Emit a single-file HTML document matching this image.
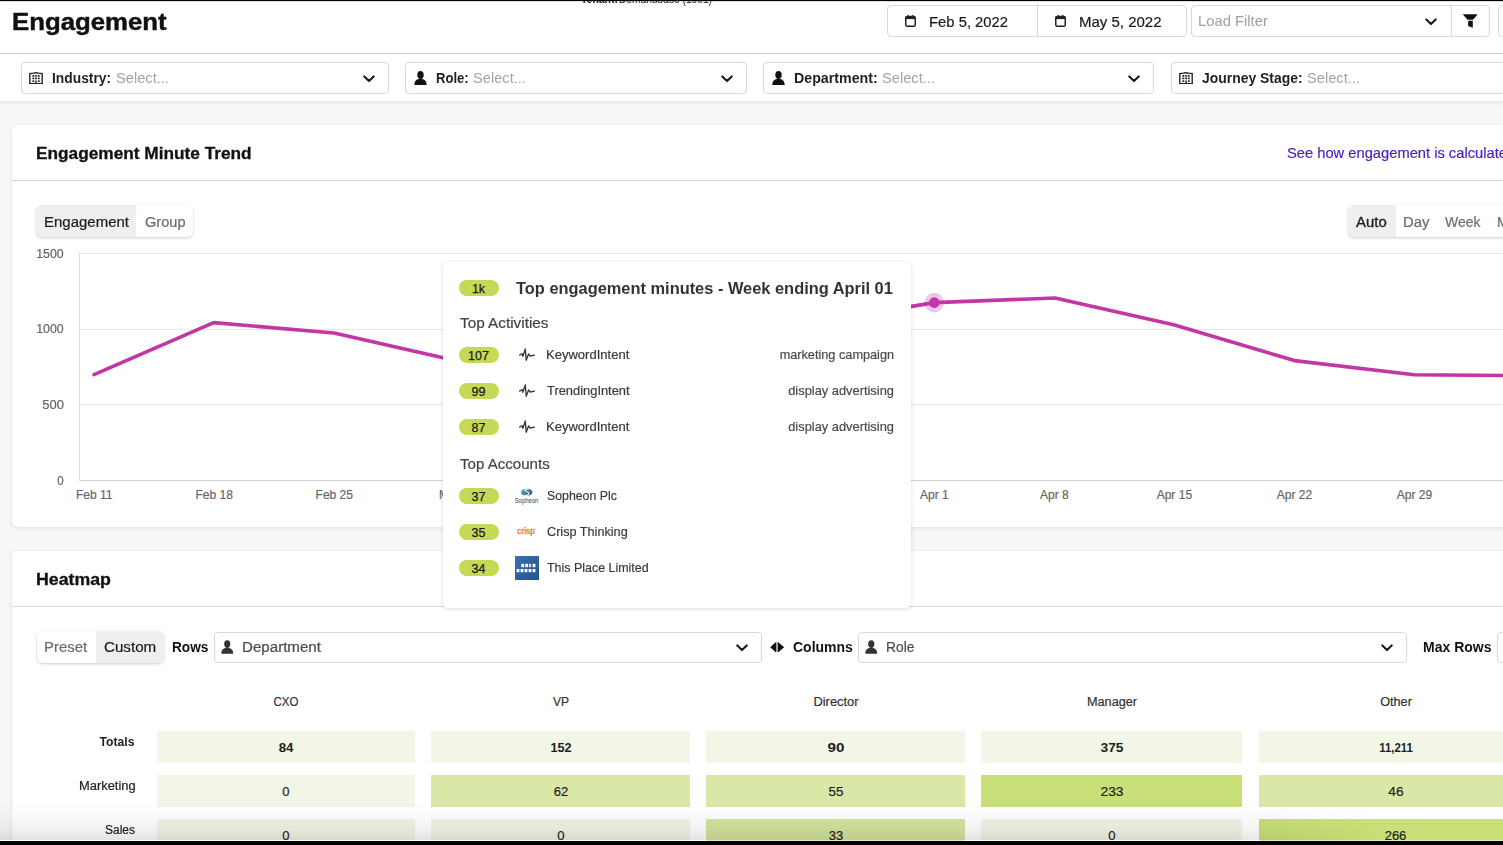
<!DOCTYPE html>
<html><head><meta charset="utf-8"><title>Engagement</title>
<style>
html,body{margin:0;padding:0}
body{width:1503px;height:845px;overflow:hidden;position:relative;background:#f8f7f5;font-family:"Liberation Sans",sans-serif}
.t{position:absolute;white-space:nowrap;line-height:1}
</style></head><body>
<div style="position:absolute;left:0px;top:0px;width:1503px;height:53px;background:#fff"></div>
<div style="position:absolute;left:0px;top:53px;width:1503px;height:1px;background:#d4d4d4"></div>
<div style="position:absolute;left:0px;top:54px;width:1503px;height:47px;background:#fff;box-shadow:0 1px 4px rgba(0,0,0,0.10)"></div>
<div class="t" style="left:12.43px;top:10.00px;font-size:24px;font-weight:700;color:#111;transform:scaleX(1.0732);transform-origin:left;-webkit-text-stroke:0.45px #111;">Engagement</div>
<div class="t" style="left:581.00px;top:-7.00px;font-size:12px;font-weight:700;color:#222;transform:scaleX(0.8687);transform-origin:left;">Tenant:</div>
<div class="t" style="left:619.00px;top:-7.00px;font-size:12px;font-weight:400;color:#444;transform:scaleX(0.8501);transform-origin:left;-webkit-text-stroke:0.2px #444;">Demandbase (1001)</div>
<div style="position:absolute;left:887px;top:5px;width:300px;height:32px;border:1px solid #d9d9d9;border-radius:4px;background:#fff;box-sizing:border-box"></div>
<div style="position:absolute;left:1036.5px;top:6px;width:1px;height:30px;background:#d9d9d9"></div>
<svg style="position:absolute;left:905px;top:15px" width="11" height="12" viewBox="0 0 11 12"><rect x="0.75" y="1.5" width="9.5" height="9.8" rx="1.6" fill="none" stroke="#222" stroke-width="1.5"/><rect x="0.75" y="1.5" width="9.5" height="2.6" fill="#222"/><rect x="2.5" y="0" width="1.3" height="2" fill="#222"/><rect x="7.2" y="0" width="1.3" height="2" fill="#222"/></svg>
<svg style="position:absolute;left:1055px;top:15px" width="11" height="12" viewBox="0 0 11 12"><rect x="0.75" y="1.5" width="9.5" height="9.8" rx="1.6" fill="none" stroke="#222" stroke-width="1.5"/><rect x="0.75" y="1.5" width="9.5" height="2.6" fill="#222"/><rect x="2.5" y="0" width="1.3" height="2" fill="#222"/><rect x="7.2" y="0" width="1.3" height="2" fill="#222"/></svg>
<div class="t" style="left:928.98px;top:15.00px;font-size:14.5px;font-weight:400;color:#1a1a1a;transform:scaleX(1.0219);transform-origin:left;-webkit-text-stroke:0.2px #1a1a1a;">Feb 5, 2022</div>
<div class="t" style="left:1078.97px;top:15.00px;font-size:14.5px;font-weight:400;color:#1a1a1a;transform:scaleX(1.0338);transform-origin:left;-webkit-text-stroke:0.2px #1a1a1a;">May 5, 2022</div>
<div style="position:absolute;left:1191px;top:5px;width:299px;height:32px;border:1px solid #d9d9d9;border-radius:4px;background:#fff;box-sizing:border-box"></div>
<div style="position:absolute;left:1450.5px;top:6px;width:1px;height:30px;background:#d9d9d9"></div>
<div class="t" style="left:1197.98px;top:14.00px;font-size:14.5px;font-weight:400;color:#a0a0a0;transform:scaleX(1.0195);transform-origin:left;">Load Filter</div>
<svg style="position:absolute;left:1424.5px;top:17.8px" width="12" height="8" viewBox="0 0 12 8"><path d="M1.3 1.4 L6 6.1 L10.7 1.4" fill="none" stroke="#1a1a1a" stroke-width="2.1" stroke-linecap="round" stroke-linejoin="round"/></svg>
<svg style="position:absolute;left:1463px;top:14px" width="15" height="14" viewBox="0 0 15 14"><path d="M0.4 0.2 H14 Q14.6 0.2 14.3 0.8 L10 5.7 H4.6 L0.1 0.8 Q-0.1 0.2 0.4 0.2 Z M5.2 6.7 H9.8 V13.4 Q9.6 13.8 9.1 13.6 L5.6 12.2 Q5 11.8 5.1 11.2 Z" fill="#111"/></svg>
<div style="position:absolute;left:1498px;top:5px;width:30px;height:32px;border:1px solid #d9d9d9;border-radius:4px;background:#fff;box-sizing:border-box"></div>
<div style="position:absolute;left:21px;top:62px;width:367.5px;height:32px;border:1px solid #d9d9d9;border-radius:4px;background:#fff;box-sizing:border-box"></div>
<svg style="position:absolute;left:29.2px;top:71.6px" width="14" height="12.5" viewBox="0 0 14 12.5"><path d="M0.8 11.8 V1.6 L4.5 1.2 Q7 0.2 9.5 1.2 L13.2 1.6 V11.8 Z" fill="none" stroke="#222" stroke-width="1.35"/><g fill="#222"><rect x="3.4" y="2.9" width="1.9" height="1.9" rx="0.5"/><rect x="6.1" y="2.9" width="1.9" height="1.9" rx="0.5"/><rect x="8.8" y="2.9" width="1.9" height="1.9" rx="0.5"/><rect x="3.4" y="5.6" width="1.9" height="1.7" rx="0.5"/><rect x="6.1" y="5.6" width="1.9" height="1.7" rx="0.5"/><rect x="8.8" y="5.6" width="1.9" height="1.7" rx="0.5"/><rect x="3.4" y="8.2" width="1.9" height="1.9" rx="0.5"/><rect x="8.8" y="8.2" width="1.9" height="1.9" rx="0.5"/><rect x="6.3" y="8.4" width="1.4" height="3.4"/><rect x="0.2" y="11" width="13.6" height="1.5"/></g></svg>
<div class="t" style="left:52.00px;top:71.00px;font-size:14px;font-weight:700;color:#1f1f1f;transform:scaleX(0.9877);transform-origin:left;">Industry:</div>
<div class="t" style="left:115.60px;top:71.00px;font-size:14px;font-weight:400;color:#a3a3a3;transform:scaleX(1.0465);transform-origin:left;">Select...</div>
<svg style="position:absolute;left:362.5px;top:74.5px" width="12" height="8" viewBox="0 0 12 8"><path d="M1.3 1.4 L6 6.1 L10.7 1.4" fill="none" stroke="#1a1a1a" stroke-width="2.1" stroke-linecap="round" stroke-linejoin="round"/></svg>
<div style="position:absolute;left:404.5px;top:62px;width:342.0px;height:32px;border:1px solid #d9d9d9;border-radius:4px;background:#fff;box-sizing:border-box"></div>
<svg style="position:absolute;left:413.8px;top:71px" width="13" height="14" viewBox="0 0 13 14"><ellipse cx="6.5" cy="3.9" rx="3.2" ry="3.8" fill="#111"/><path d="M0.3 14 C0.3 10.6 1.8 8.8 4.5 8.1 L5.3 7.2 H7.7 L8.5 8.1 C11.2 8.8 12.7 10.6 12.7 14 Z" fill="#111"/></svg>
<div class="t" style="left:435.50px;top:71.00px;font-size:14px;font-weight:700;color:#1f1f1f;transform:scaleX(0.9319);transform-origin:left;">Role:</div>
<div class="t" style="left:473.00px;top:71.00px;font-size:14px;font-weight:400;color:#a3a3a3;transform:scaleX(1.0465);transform-origin:left;">Select...</div>
<svg style="position:absolute;left:720.5px;top:74.5px" width="12" height="8" viewBox="0 0 12 8"><path d="M1.3 1.4 L6 6.1 L10.7 1.4" fill="none" stroke="#1a1a1a" stroke-width="2.1" stroke-linecap="round" stroke-linejoin="round"/></svg>
<div style="position:absolute;left:763px;top:62px;width:391px;height:32px;border:1px solid #d9d9d9;border-radius:4px;background:#fff;box-sizing:border-box"></div>
<svg style="position:absolute;left:772.3px;top:71px" width="13" height="14" viewBox="0 0 13 14"><ellipse cx="6.5" cy="3.9" rx="3.2" ry="3.8" fill="#111"/><path d="M0.3 14 C0.3 10.6 1.8 8.8 4.5 8.1 L5.3 7.2 H7.7 L8.5 8.1 C11.2 8.8 12.7 10.6 12.7 14 Z" fill="#111"/></svg>
<div class="t" style="left:794.00px;top:71.00px;font-size:14px;font-weight:700;color:#1f1f1f;transform:scaleX(1.0148);transform-origin:left;">Department:</div>
<div class="t" style="left:881.80px;top:71.00px;font-size:14px;font-weight:400;color:#a3a3a3;transform:scaleX(1.0465);transform-origin:left;">Select...</div>
<svg style="position:absolute;left:1128px;top:74.5px" width="12" height="8" viewBox="0 0 12 8"><path d="M1.3 1.4 L6 6.1 L10.7 1.4" fill="none" stroke="#1a1a1a" stroke-width="2.1" stroke-linecap="round" stroke-linejoin="round"/></svg>
<div style="position:absolute;left:1171px;top:62px;width:389px;height:32px;border:1px solid #d9d9d9;border-radius:4px;background:#fff;box-sizing:border-box"></div>
<svg style="position:absolute;left:1179.2px;top:71.6px" width="14" height="12.5" viewBox="0 0 14 12.5"><path d="M0.8 11.8 V1.6 L4.5 1.2 Q7 0.2 9.5 1.2 L13.2 1.6 V11.8 Z" fill="none" stroke="#222" stroke-width="1.35"/><g fill="#222"><rect x="3.4" y="2.9" width="1.9" height="1.9" rx="0.5"/><rect x="6.1" y="2.9" width="1.9" height="1.9" rx="0.5"/><rect x="8.8" y="2.9" width="1.9" height="1.9" rx="0.5"/><rect x="3.4" y="5.6" width="1.9" height="1.7" rx="0.5"/><rect x="6.1" y="5.6" width="1.9" height="1.7" rx="0.5"/><rect x="8.8" y="5.6" width="1.9" height="1.7" rx="0.5"/><rect x="3.4" y="8.2" width="1.9" height="1.9" rx="0.5"/><rect x="8.8" y="8.2" width="1.9" height="1.9" rx="0.5"/><rect x="6.3" y="8.4" width="1.4" height="3.4"/><rect x="0.2" y="11" width="13.6" height="1.5"/></g></svg>
<div class="t" style="left:1202.00px;top:71.00px;font-size:14px;font-weight:700;color:#1f1f1f;transform:scaleX(0.9953);transform-origin:left;">Journey Stage:</div>
<div class="t" style="left:1307.20px;top:71.00px;font-size:14px;font-weight:400;color:#a3a3a3;transform:scaleX(1.0465);transform-origin:left;">Select...</div>
<div style="position:absolute;left:12px;top:125px;width:1560px;height:402px;background:#fff;border-radius:6px;box-shadow:0 1px 4px rgba(0,0,0,0.10)"></div>
<div style="position:absolute;left:12px;top:180px;width:1560px;height:1px;background:#d9d9d9"></div>
<div class="t" style="left:36.22px;top:146.00px;font-size:16px;font-weight:700;color:#111;transform:scaleX(1.0780);transform-origin:left;-webkit-text-stroke:0.3px #111;">Engagement Minute Trend</div>
<div class="t" style="left:1287.00px;top:146.00px;font-size:14.5px;font-weight:400;color:#4a1fc0;transform:scaleX(1.0141);transform-origin:left;-webkit-text-stroke:0.2px #4a1fc0;">See how engagement is calculated</div>
<div style="position:absolute;left:36px;top:205px;width:157px;height:32px;background:#fff;border-radius:6px;box-shadow:0 1px 3px rgba(0,0,0,0.20)"></div>
<div style="position:absolute;left:36px;top:205px;width:100px;height:32px;background:#eef0ed;border-radius:6px 0 0 6px"></div>
<div class="t" style="left:43.53px;top:215.00px;font-size:14px;font-weight:400;color:#1a1a1a;transform:scaleX(1.0700);transform-origin:left;-webkit-text-stroke:0.2px #1a1a1a;">Engagement</div>
<div class="t" style="left:145.00px;top:215.00px;font-size:14px;font-weight:400;color:#6b6b6b;transform:scaleX(1.0403);transform-origin:left;-webkit-text-stroke:0.2px #6b6b6b;">Group</div>
<div style="position:absolute;left:1347.5px;top:205px;width:200px;height:32px;background:#fff;border-radius:6px;box-shadow:0 1px 3px rgba(0,0,0,0.20)"></div>
<div style="position:absolute;left:1347.5px;top:205px;width:48px;height:32px;background:#eef0ed;border-radius:6px 0 0 6px"></div>
<div class="t" style="left:1356.00px;top:215.00px;font-size:14px;font-weight:400;color:#1a1a1a;transform:scaleX(1.0685);transform-origin:left;-webkit-text-stroke:0.3px #1a1a1a;">Auto</div>
<div class="t" style="left:1402.54px;top:215.00px;font-size:14px;font-weight:400;color:#6b6b6b;transform:scaleX(1.0629);transform-origin:left;-webkit-text-stroke:0.2px #6b6b6b;">Day</div>
<div class="t" style="left:1445.20px;top:215.00px;font-size:14px;font-weight:400;color:#6b6b6b;transform:scaleX(0.9964);transform-origin:left;-webkit-text-stroke:0.2px #6b6b6b;">Week</div>
<div class="t" style="left:1497.00px;top:215.00px;font-size:14px;font-weight:400;color:#6b6b6b;-webkit-text-stroke:0.2px #6b6b6b;">Month</div>
<svg style="position:absolute;left:0;top:0" width="1503" height="845"><line x1="79" y1="253.5" x2="1503" y2="253.5" stroke="#e6e6e6" stroke-width="1"/><line x1="79" y1="329.5" x2="1503" y2="329.5" stroke="#e6e6e6" stroke-width="1"/><line x1="79" y1="404.5" x2="1503" y2="404.5" stroke="#e6e6e6" stroke-width="1"/><line x1="79" y1="480.5" x2="1503" y2="480.5" stroke="#d0d0d0" stroke-width="1"/><line x1="79.5" y1="253" x2="79.5" y2="481" stroke="#dcdcdc" stroke-width="1"/><path d="M94,374.6 L213.7,322.6 L334,333 L454,360.3 L574,372 L694,350 L814,322.6 L934.3,302.6 L1055,298 L1173.7,324.7 L1294.3,360.6 L1414.2,374.7 L1534,375.8" fill="none" stroke="#c236a6" stroke-width="3.6" stroke-linejoin="round" stroke-linecap="round"/><circle cx="934.3" cy="302.6" r="9.8" fill="#c236a6" fill-opacity="0.27"/><circle cx="934.3" cy="302.6" r="5.3" fill="#c236a6"/></svg>
<div class="t" style="right:1439.14px;top:248.00px;font-size:12px;font-weight:400;color:#666;transform:scaleX(1.0288);transform-origin:right;-webkit-text-stroke:0.2px #666;">1500</div>
<div class="t" style="right:1439.14px;top:323.00px;font-size:12px;font-weight:400;color:#666;transform:scaleX(1.0288);transform-origin:right;-webkit-text-stroke:0.2px #666;">1000</div>
<div class="t" style="right:1439.15px;top:399.00px;font-size:12px;font-weight:400;color:#666;transform:scaleX(1.0812);transform-origin:right;-webkit-text-stroke:0.2px #666;">500</div>
<div class="t" style="right:1439.11px;top:475.00px;font-size:12px;font-weight:400;color:#666;transform:scaleX(0.9571);transform-origin:right;-webkit-text-stroke:0.2px #666;">0</div>
<div class="t" style="left:94.20px;top:489.00px;font-size:12px;font-weight:400;color:#666;transform:translateX(-50%) scaleX(1.0000);-webkit-text-stroke:0.2px #666;">Feb 11</div>
<div class="t" style="left:214.22px;top:489.00px;font-size:12px;font-weight:400;color:#666;transform:translateX(-50%) scaleX(1.0000);-webkit-text-stroke:0.2px #666;">Feb 18</div>
<div class="t" style="left:334.24px;top:489.00px;font-size:12px;font-weight:400;color:#666;transform:translateX(-50%) scaleX(1.0000);-webkit-text-stroke:0.2px #666;">Feb 25</div>
<div class="t" style="left:454.26px;top:489.00px;font-size:12px;font-weight:400;color:#666;transform:translateX(-50%) scaleX(1.0000);-webkit-text-stroke:0.2px #666;">Mar 4</div>
<div class="t" style="left:574.28px;top:489.00px;font-size:12px;font-weight:400;color:#666;transform:translateX(-50%) scaleX(1.0000);-webkit-text-stroke:0.2px #666;">Mar 11</div>
<div class="t" style="left:694.30px;top:489.00px;font-size:12px;font-weight:400;color:#666;transform:translateX(-50%) scaleX(1.0000);-webkit-text-stroke:0.2px #666;">Mar 18</div>
<div class="t" style="left:814.32px;top:489.00px;font-size:12px;font-weight:400;color:#666;transform:translateX(-50%) scaleX(1.0000);-webkit-text-stroke:0.2px #666;">Mar 25</div>
<div class="t" style="left:934.34px;top:489.00px;font-size:12px;font-weight:400;color:#666;transform:translateX(-50%) scaleX(1.0000);-webkit-text-stroke:0.2px #666;">Apr 1</div>
<div class="t" style="left:1054.36px;top:489.00px;font-size:12px;font-weight:400;color:#666;transform:translateX(-50%) scaleX(1.0000);-webkit-text-stroke:0.2px #666;">Apr 8</div>
<div class="t" style="left:1174.38px;top:489.00px;font-size:12px;font-weight:400;color:#666;transform:translateX(-50%) scaleX(1.0000);-webkit-text-stroke:0.2px #666;">Apr 15</div>
<div class="t" style="left:1294.40px;top:489.00px;font-size:12px;font-weight:400;color:#666;transform:translateX(-50%) scaleX(1.0000);-webkit-text-stroke:0.2px #666;">Apr 22</div>
<div class="t" style="left:1414.42px;top:489.00px;font-size:12px;font-weight:400;color:#666;transform:translateX(-50%) scaleX(1.0000);-webkit-text-stroke:0.2px #666;">Apr 29</div>
<div class="t" style="left:1534.44px;top:489.00px;font-size:12px;font-weight:400;color:#666;transform:translateX(-50%) scaleX(1.0000);-webkit-text-stroke:0.2px #666;">May 6</div>
<div style="position:absolute;left:12px;top:551px;width:1560px;height:400px;background:#fff;border-radius:6px;box-shadow:0 1px 4px rgba(0,0,0,0.10)"></div>
<div style="position:absolute;left:12px;top:606px;width:1560px;height:1px;background:#d9d9d9"></div>
<div class="t" style="left:36.29px;top:572.00px;font-size:16px;font-weight:700;color:#111;transform:scaleX(1.1077);transform-origin:left;-webkit-text-stroke:0.3px #111;">Heatmap</div>
<div style="position:absolute;left:36.5px;top:631px;width:127.5px;height:32px;background:#fff;border-radius:6px;box-shadow:0 1px 3px rgba(0,0,0,0.20)"></div>
<div style="position:absolute;left:95.7px;top:631px;width:68.3px;height:32px;background:#eef0ed;border-radius:0 6px 6px 0"></div>
<div class="t" style="left:43.93px;top:640.00px;font-size:14px;font-weight:400;color:#6b6b6b;transform:scaleX(1.0689);transform-origin:left;-webkit-text-stroke:0.2px #6b6b6b;">Preset</div>
<div class="t" style="left:104.00px;top:640.00px;font-size:14px;font-weight:400;color:#1a1a1a;transform:scaleX(1.0826);transform-origin:left;-webkit-text-stroke:0.2px #1a1a1a;">Custom</div>
<div class="t" style="left:172.20px;top:640.00px;font-size:14px;font-weight:700;color:#111;transform:scaleX(0.9747);transform-origin:left;">Rows</div>
<div style="position:absolute;left:214px;top:631.5px;width:548px;height:31px;border:1px solid #d9d9d9;border-radius:4px;background:#fff;box-sizing:border-box"></div>
<svg style="position:absolute;left:221px;top:640px" width="12.5" height="14" viewBox="0 0 13 14"><ellipse cx="6.5" cy="3.9" rx="3.2" ry="3.8" fill="#333"/><path d="M0.3 14 C0.3 10.6 1.8 8.8 4.5 8.1 L5.3 7.2 H7.7 L8.5 8.1 C11.2 8.8 12.7 10.6 12.7 14 Z" fill="#333"/></svg>
<div class="t" style="left:241.62px;top:640.00px;font-size:14px;font-weight:400;color:#4a4a4a;transform:scaleX(1.0795);transform-origin:left;-webkit-text-stroke:0.2px #4a4a4a;">Department</div>
<svg style="position:absolute;left:736px;top:643.8px" width="12" height="8" viewBox="0 0 12 8"><path d="M1.3 1.4 L6 6.1 L10.7 1.4" fill="none" stroke="#1a1a1a" stroke-width="2.1" stroke-linecap="round" stroke-linejoin="round"/></svg>
<svg style="position:absolute;left:770.3px;top:641.6px" width="14.4" height="10.5" viewBox="0 0 14.4 10.5"><path d="M6 0 Q6.4 0 6.4 0.4 V10.1 Q6.4 10.5 6 10.5 L0.2 5.25 Z M8 0 Q7.6 0 7.6 0.4 V10.1 Q7.6 10.5 8 10.5 L14.2 5.25 Z" fill="#111"/></svg>
<div class="t" style="left:793.10px;top:640.00px;font-size:14px;font-weight:700;color:#111;transform:scaleX(0.9983);transform-origin:left;">Columns</div>
<div style="position:absolute;left:858px;top:631.5px;width:549px;height:31px;border:1px solid #d9d9d9;border-radius:4px;background:#fff;box-sizing:border-box"></div>
<svg style="position:absolute;left:865.3px;top:640.2px" width="12.5" height="14" viewBox="0 0 13 14"><ellipse cx="6.5" cy="3.9" rx="3.2" ry="3.8" fill="#333"/><path d="M0.3 14 C0.3 10.6 1.8 8.8 4.5 8.1 L5.3 7.2 H7.7 L8.5 8.1 C11.2 8.8 12.7 10.6 12.7 14 Z" fill="#333"/></svg>
<div class="t" style="left:886.01px;top:640.00px;font-size:14px;font-weight:400;color:#4a4a4a;transform:scaleX(0.9855);transform-origin:left;-webkit-text-stroke:0.2px #4a4a4a;">Role</div>
<svg style="position:absolute;left:1380.5px;top:643.6px" width="12" height="8" viewBox="0 0 12 8"><path d="M1.3 1.4 L6 6.1 L10.7 1.4" fill="none" stroke="#1a1a1a" stroke-width="2.1" stroke-linecap="round" stroke-linejoin="round"/></svg>
<div class="t" style="left:1423.30px;top:640.00px;font-size:14px;font-weight:700;color:#111;transform:scaleX(1.0004);transform-origin:left;">Max Rows</div>
<div style="position:absolute;left:1497px;top:631.5px;width:60px;height:31px;border:1px solid #d9d9d9;border-radius:4px;background:#fff;box-sizing:border-box"></div>
<div class="t" style="left:285.95px;top:696.00px;font-size:12px;font-weight:400;color:#333;transform:translateX(-50%) scaleX(0.9583);-webkit-text-stroke:0.2px #333;">CXO</div>
<div class="t" style="left:560.90px;top:696.00px;font-size:12px;font-weight:400;color:#333;transform:translateX(-50%) scaleX(0.9998);-webkit-text-stroke:0.2px #333;">VP</div>
<div class="t" style="left:835.90px;top:696.00px;font-size:12px;font-weight:400;color:#333;transform:translateX(-50%) scaleX(1.0759);-webkit-text-stroke:0.2px #333;">Director</div>
<div class="t" style="left:1111.95px;top:696.00px;font-size:12px;font-weight:400;color:#333;transform:translateX(-50%) scaleX(1.0598);-webkit-text-stroke:0.2px #333;">Manager</div>
<div class="t" style="left:1395.50px;top:696.00px;font-size:12px;font-weight:400;color:#333;transform:translateX(-50%) scaleX(1.0561);-webkit-text-stroke:0.2px #333;">Other</div>
<div class="t" style="right:1368.13px;top:736.00px;font-size:12px;font-weight:700;color:#222;transform:scaleX(1.0151);transform-origin:right;">Totals</div>
<div style="position:absolute;left:156.5px;top:731px;width:258.9px;height:32px;background:#f2f6e6"></div>
<div class="t" style="left:285.95px;top:741.00px;font-size:13px;font-weight:700;color:#1f1f1f;transform:translateX(-50%) scaleX(1.0177);">84</div>
<div style="position:absolute;left:431.4px;top:731px;width:259px;height:32px;background:#f2f6e6"></div>
<div class="t" style="left:560.90px;top:741.00px;font-size:13px;font-weight:700;color:#1f1f1f;transform:translateX(-50%) scaleX(0.9739);">152</div>
<div style="position:absolute;left:706.4px;top:731px;width:259px;height:32px;background:#f2f6e6"></div>
<div class="t" style="left:835.90px;top:741.00px;font-size:13px;font-weight:700;color:#1f1f1f;transform:translateX(-50%) scaleX(1.1666);">90</div>
<div style="position:absolute;left:981.4px;top:731px;width:261.1px;height:32px;background:#f2f6e6"></div>
<div class="t" style="left:1111.95px;top:741.00px;font-size:13px;font-weight:700;color:#1f1f1f;transform:translateX(-50%) scaleX(1.0624);">375</div>
<div style="position:absolute;left:1258.5px;top:731px;width:274px;height:32px;background:#f2f6e6"></div>
<div class="t" style="left:1395.50px;top:741.00px;font-size:13px;font-weight:700;color:#1f1f1f;transform:translateX(-50%) scaleX(0.8793);">11,211</div>
<div class="t" style="right:1367.07px;top:780.00px;font-size:12px;font-weight:400;color:#222;transform:scaleX(1.0766);transform-origin:right;-webkit-text-stroke:0.2px #222;">Marketing</div>
<div style="position:absolute;left:156.5px;top:775px;width:258.9px;height:32px;background:#f2f6e6"></div>
<div class="t" style="left:285.95px;top:785.00px;font-size:13px;font-weight:400;color:#1f1f1f;transform:translateX(-50%) scaleX(1.0000);-webkit-text-stroke:0.2px #1f1f1f;">0</div>
<div style="position:absolute;left:431.4px;top:775px;width:259px;height:32px;background:#d9e7a7"></div>
<div class="t" style="left:560.90px;top:785.00px;font-size:13px;font-weight:400;color:#1f1f1f;transform:translateX(-50%) scaleX(1.0049);-webkit-text-stroke:0.2px #1f1f1f;">62</div>
<div style="position:absolute;left:706.4px;top:775px;width:259px;height:32px;background:#d9e7a7"></div>
<div class="t" style="left:835.90px;top:785.00px;font-size:13px;font-weight:400;color:#1f1f1f;transform:translateX(-50%) scaleX(1.0260);-webkit-text-stroke:0.2px #1f1f1f;">55</div>
<div style="position:absolute;left:981.4px;top:775px;width:261.1px;height:32px;background:#c9df77"></div>
<div class="t" style="left:1111.95px;top:785.00px;font-size:13px;font-weight:400;color:#1f1f1f;transform:translateX(-50%) scaleX(1.0624);-webkit-text-stroke:0.2px #1f1f1f;">233</div>
<div style="position:absolute;left:1258.5px;top:775px;width:274px;height:32px;background:#d9e7a7"></div>
<div class="t" style="left:1395.50px;top:785.00px;font-size:13px;font-weight:400;color:#1f1f1f;transform:translateX(-50%) scaleX(1.0541);-webkit-text-stroke:0.2px #1f1f1f;">46</div>
<div class="t" style="right:1367.80px;top:824.00px;font-size:12px;font-weight:400;color:#222;transform:scaleX(0.9994);transform-origin:right;-webkit-text-stroke:0.2px #222;">Sales</div>
<div style="position:absolute;left:156.5px;top:819px;width:258.9px;height:32px;background:#f2f6e6"></div>
<div class="t" style="left:285.95px;top:829.00px;font-size:13px;font-weight:400;color:#1f1f1f;transform:translateX(-50%) scaleX(1.0000);-webkit-text-stroke:0.2px #1f1f1f;">0</div>
<div style="position:absolute;left:431.4px;top:819px;width:259px;height:32px;background:#f2f6e6"></div>
<div class="t" style="left:560.90px;top:829.00px;font-size:13px;font-weight:400;color:#1f1f1f;transform:translateX(-50%) scaleX(1.0000);-webkit-text-stroke:0.2px #1f1f1f;">0</div>
<div style="position:absolute;left:706.4px;top:819px;width:259px;height:32px;background:#d6e59f"></div>
<div class="t" style="left:835.90px;top:829.00px;font-size:13px;font-weight:400;color:#1f1f1f;transform:translateX(-50%) scaleX(1.0000);-webkit-text-stroke:0.2px #1f1f1f;">33</div>
<div style="position:absolute;left:981.4px;top:819px;width:261.1px;height:32px;background:#f2f6e6"></div>
<div class="t" style="left:1111.95px;top:829.00px;font-size:13px;font-weight:400;color:#1f1f1f;transform:translateX(-50%) scaleX(1.0000);-webkit-text-stroke:0.2px #1f1f1f;">0</div>
<div style="position:absolute;left:1258.5px;top:819px;width:274px;height:32px;background:#c9df77"></div>
<div class="t" style="left:1395.50px;top:829.00px;font-size:13px;font-weight:400;color:#1f1f1f;transform:translateX(-50%) scaleX(1.0000);-webkit-text-stroke:0.2px #1f1f1f;">266</div>
<div style="position:absolute;left:442.5px;top:262px;width:468px;height:345.5px;background:#fff;border-radius:5px;box-shadow:0 1px 4px rgba(0,0,0,0.14)"></div>
<div style="position:absolute;left:458.5px;top:280px;width:40px;height:16px;background:#c5d957;border-radius:8px"></div>
<div class="t" style="left:478.50px;top:283.00px;font-size:12.5px;font-weight:400;color:#1a1a1a;transform:translateX(-50%) scaleX(1.0000);-webkit-text-stroke:0.25px #1a1a1a;">1k</div>
<div class="t" style="left:515.60px;top:281.00px;font-size:16px;font-weight:700;color:#333;transform:scaleX(1.0246);transform-origin:left;">Top engagement minutes - Week ending April 01</div>
<div class="t" style="left:459.70px;top:316.00px;font-size:14px;font-weight:400;color:#444;transform:scaleX(1.0931);transform-origin:left;-webkit-text-stroke:0.2px #444;">Top Activities</div>
<div style="position:absolute;left:458.5px;top:347px;width:40px;height:16px;background:#c5d957;border-radius:8px"></div>
<div class="t" style="left:478.50px;top:350.00px;font-size:12.5px;font-weight:400;color:#1a1a1a;transform:translateX(-50%) scaleX(1.0000);-webkit-text-stroke:0.25px #1a1a1a;">107</div>
<svg style="position:absolute;left:518.5px;top:348.2px" width="16" height="14" viewBox="0 0 16 14"><path d="M0.6 7.1 L3.3 5.7 L3.9 8.3 L6.3 0.9 L7.2 12.3 L9.6 5.9 L11.3 8 L15.4 7.1" fill="none" stroke="#3a3a3a" stroke-width="1.35" stroke-linejoin="round" stroke-linecap="round"/></svg>
<div class="t" style="left:545.90px;top:348.00px;font-size:13px;font-weight:400;color:#3a3a3a;transform:scaleX(1.0025);transform-origin:left;-webkit-text-stroke:0.2px #3a3a3a;">KeywordIntent</div>
<div class="t" style="right:609.08px;top:348.00px;font-size:13px;font-weight:400;color:#4a4a4a;transform:scaleX(0.9775);transform-origin:right;-webkit-text-stroke:0.2px #4a4a4a;">marketing campaign</div>
<div style="position:absolute;left:458.5px;top:383px;width:40px;height:16px;background:#c5d957;border-radius:8px"></div>
<div class="t" style="left:478.50px;top:386.00px;font-size:12.5px;font-weight:400;color:#1a1a1a;transform:translateX(-50%) scaleX(1.0000);-webkit-text-stroke:0.25px #1a1a1a;">99</div>
<svg style="position:absolute;left:518.5px;top:384.2px" width="16" height="14" viewBox="0 0 16 14"><path d="M0.6 7.1 L3.3 5.7 L3.9 8.3 L6.3 0.9 L7.2 12.3 L9.6 5.9 L11.3 8 L15.4 7.1" fill="none" stroke="#3a3a3a" stroke-width="1.35" stroke-linejoin="round" stroke-linecap="round"/></svg>
<div class="t" style="left:546.90px;top:384.00px;font-size:13px;font-weight:400;color:#3a3a3a;transform:scaleX(0.9912);transform-origin:left;-webkit-text-stroke:0.2px #3a3a3a;">TrendingIntent</div>
<div class="t" style="right:609.07px;top:384.00px;font-size:13px;font-weight:400;color:#4a4a4a;transform:scaleX(0.9886);transform-origin:right;-webkit-text-stroke:0.2px #4a4a4a;">display advertising</div>
<div style="position:absolute;left:458.5px;top:419px;width:40px;height:16px;background:#c5d957;border-radius:8px"></div>
<div class="t" style="left:478.50px;top:422.00px;font-size:12.5px;font-weight:400;color:#1a1a1a;transform:translateX(-50%) scaleX(1.0000);-webkit-text-stroke:0.25px #1a1a1a;">87</div>
<svg style="position:absolute;left:518.5px;top:420.2px" width="16" height="14" viewBox="0 0 16 14"><path d="M0.6 7.1 L3.3 5.7 L3.9 8.3 L6.3 0.9 L7.2 12.3 L9.6 5.9 L11.3 8 L15.4 7.1" fill="none" stroke="#3a3a3a" stroke-width="1.35" stroke-linejoin="round" stroke-linecap="round"/></svg>
<div class="t" style="left:545.90px;top:420.00px;font-size:13px;font-weight:400;color:#3a3a3a;transform:scaleX(1.0025);transform-origin:left;-webkit-text-stroke:0.2px #3a3a3a;">KeywordIntent</div>
<div class="t" style="right:609.07px;top:420.00px;font-size:13px;font-weight:400;color:#4a4a4a;transform:scaleX(0.9886);transform-origin:right;-webkit-text-stroke:0.2px #4a4a4a;">display advertising</div>
<div class="t" style="left:459.50px;top:457.00px;font-size:14px;font-weight:400;color:#444;transform:scaleX(1.0768);transform-origin:left;-webkit-text-stroke:0.2px #444;">Top Accounts</div>
<div style="position:absolute;left:458.5px;top:488.0px;width:40px;height:16px;background:#c5d957;border-radius:8px"></div>
<div class="t" style="left:478.50px;top:491.00px;font-size:12.5px;font-weight:400;color:#1a1a1a;transform:translateX(-50%) scaleX(1.0000);-webkit-text-stroke:0.25px #1a1a1a;">37</div>
<div class="t" style="left:546.90px;top:489.00px;font-size:13px;font-weight:400;color:#3a3a3a;transform:scaleX(0.9472);transform-origin:left;-webkit-text-stroke:0.2px #3a3a3a;">Sopheon Plc</div>
<div style="position:absolute;left:458.5px;top:524.1px;width:40px;height:16px;background:#c5d957;border-radius:8px"></div>
<div class="t" style="left:478.50px;top:527.00px;font-size:12.5px;font-weight:400;color:#1a1a1a;transform:translateX(-50%) scaleX(1.0000);-webkit-text-stroke:0.25px #1a1a1a;">35</div>
<div class="t" style="left:546.90px;top:525.00px;font-size:13px;font-weight:400;color:#3a3a3a;transform:scaleX(0.9740);transform-origin:left;-webkit-text-stroke:0.2px #3a3a3a;">Crisp Thinking</div>
<div style="position:absolute;left:458.5px;top:560.2px;width:40px;height:16px;background:#c5d957;border-radius:8px"></div>
<div class="t" style="left:478.50px;top:563.00px;font-size:12.5px;font-weight:400;color:#1a1a1a;transform:translateX(-50%) scaleX(1.0000);-webkit-text-stroke:0.25px #1a1a1a;">34</div>
<div class="t" style="left:546.90px;top:561.00px;font-size:13px;font-weight:400;color:#3a3a3a;transform:scaleX(0.9568);transform-origin:left;-webkit-text-stroke:0.2px #3a3a3a;">This Place Limited</div>
<svg style="position:absolute;left:514px;top:486px" width="25" height="19" viewBox="0 0 25 19"><defs><linearGradient id="sg" x1="0" y1="0" x2="1" y2="1"><stop offset="0" stop-color="#9cc9d0"/><stop offset="0.5" stop-color="#3f7f95"/><stop offset="1" stop-color="#1d3f66"/></linearGradient></defs><ellipse cx="12.7" cy="6.1" rx="5.8" ry="3.7" fill="url(#sg)"/><path d="M14.6 3 C12 2.4 10.6 3.6 11.6 5 C12.6 6.3 15.6 6 14.8 8 C14.2 9.3 12.2 9.6 10.4 9.2" fill="none" stroke="#fff" stroke-width="1.1"/><text x="12.5" y="17.2" font-size="7.2" text-anchor="middle" fill="#3a3a3a" font-family="Liberation Sans" textLength="23.6" lengthAdjust="spacingAndGlyphs">Sopheon</text></svg>
<svg style="position:absolute;left:516px;top:526px" width="21" height="11" viewBox="0 0 21 11"><text x="10" y="8.2" font-size="8.5" text-anchor="middle" fill="#e57e48" stroke="#e57e48" stroke-width="0.35" font-family="Liberation Sans" textLength="17.5" lengthAdjust="spacingAndGlyphs">crisp</text><circle cx="19.8" cy="2.8" r="0.6" fill="#e9a07a"/></svg>
<div style="position:absolute;left:514.5px;top:556px;width:24px;height:24px;background:linear-gradient(135deg,#3b70b0,#23538e)"></div>
<svg style="position:absolute;left:514.5px;top:556px" width="24" height="24" viewBox="0 0 24 24"><g fill="#fff"><rect x="6.3" y="7.8" width="2.8" height="3.4"/><rect x="10.3" y="7.8" width="2.8" height="3.4"/><rect x="14.3" y="7.8" width="1.6" height="3.4"/><rect x="17.6" y="7.8" width="2.8" height="3.4"/><rect x="1.6" y="13" width="2.8" height="3.2"/><rect x="5.6" y="13" width="2.8" height="3.2"/><rect x="9.6" y="13" width="2.8" height="3.2"/><rect x="13.6" y="13" width="2.8" height="3.2"/><rect x="17.6" y="13" width="2.8" height="3.2"/></g></svg>
<div style="position:absolute;left:0px;top:0px;width:1503px;height:1px;background:#000"></div>
<div style="position:absolute;left:0px;top:1px;width:1503px;height:1px;background:rgba(0,0,0,0.12)"></div>
<div style="position:absolute;left:0px;top:798px;width:1503px;height:42px;background:linear-gradient(to bottom, rgba(0,0,0,0) 0%, rgba(0,0,0,0.02) 40%, rgba(0,0,0,0.055) 75%, rgba(0,0,0,0.11) 100%);-webkit-mask-image:linear-gradient(to right,#000 0,#000 1230px,rgba(0,0,0,0) 1385px)"></div>
<div style="position:absolute;left:0px;top:840px;width:1503px;height:1px;background:rgba(255,255,255,0.4)"></div>
<div style="position:absolute;left:0px;top:841px;width:1503px;height:4px;background:#000"></div>
</body></html>
